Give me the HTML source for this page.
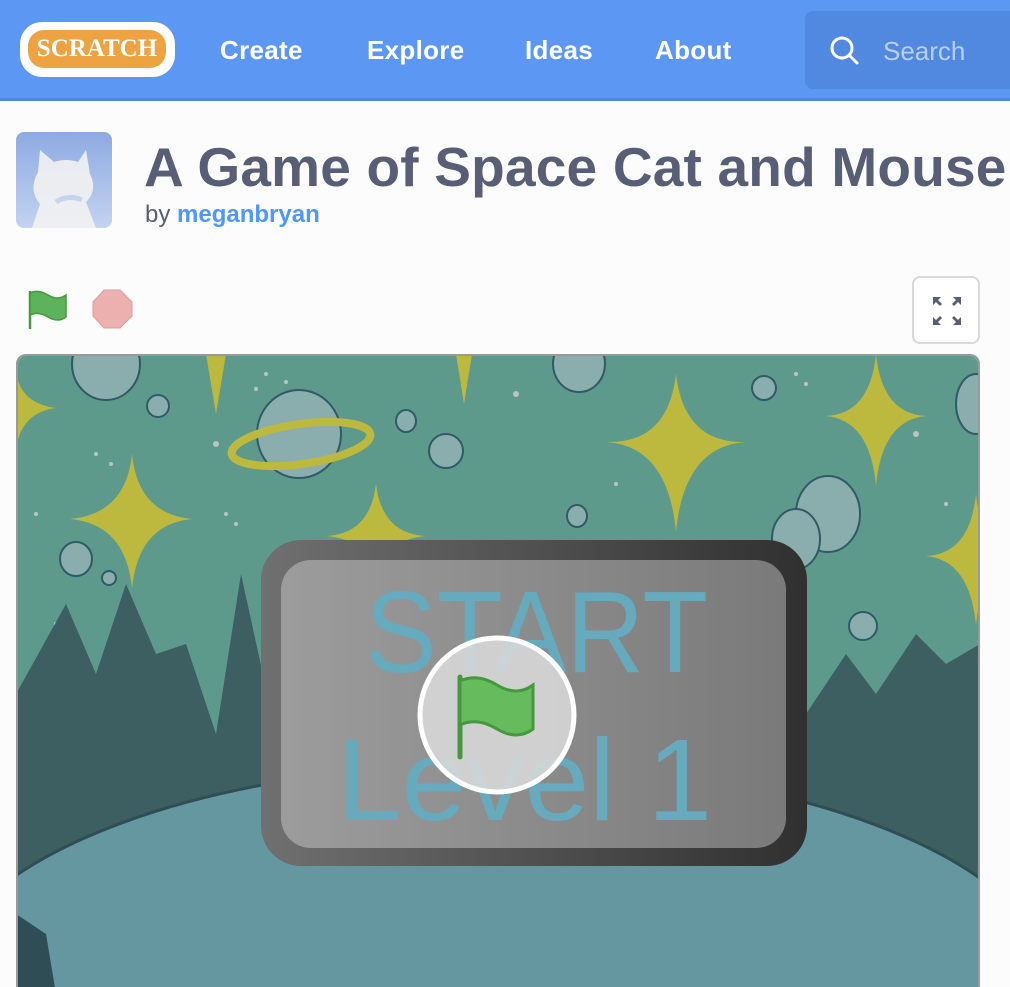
<!DOCTYPE html>
<html><head><meta charset="utf-8"><style>
*{margin:0;padding:0;box-sizing:border-box}
html,body{width:1010px;height:987px;overflow:hidden}
body{background:#fcfcfc;font-family:"Liberation Sans",Helvetica,Arial,sans-serif;position:relative}
.nav{position:absolute;left:0;top:0;width:1010px;height:101px;background:#5d97f4;border-bottom:3px solid #4f85df}
.logo{position:absolute;left:20px;top:22px;width:155px;height:55px;background:#fff;border-radius:22px}
.logo span{position:absolute;left:8px;top:8px;width:138px;height:38px;background:#eea343;border-radius:16px;color:#fff;font:bold 25px "Liberation Serif",serif;text-align:center;line-height:38px}
.nl{position:absolute;top:35px;color:#fff;font-weight:bold;font-size:26px;letter-spacing:0.3px}
.search{position:absolute;left:805px;top:11px;width:220px;height:78px;background:#5188e0;border-radius:8px}
.search span{position:absolute;left:78px;top:25px;color:#b9cff7;font-size:26px}
.avatar{position:absolute;left:16px;top:132px;width:96px;height:96px;border-radius:8px;background:linear-gradient(#8eaae2,#c3d3f0);overflow:hidden}
h1{position:absolute;left:144px;top:135px;font-size:55px;color:#575e75;font-weight:bold;white-space:nowrap;letter-spacing:0.2px}
.by{position:absolute;left:145px;top:201px;font-size:24px;color:#575e75}
.by b{color:#4d97ff}
.fs{position:absolute;left:912px;top:276px;width:68px;height:68px;border:2px solid #d9d9d9;border-radius:8px;background:#fff}
</style></head><body>
<div class="nav">
<div class="logo"><span>SCRATCH</span></div>
<div class="nl" style="left:220px">Create</div>
<div class="nl" style="left:367px">Explore</div>
<div class="nl" style="left:525px">Ideas</div>
<div class="nl" style="left:655px">About</div>
<div class="search"><svg style="position:absolute;left:24px;top:24px" width="32" height="32" viewBox="0 0 32 32"><circle cx="13" cy="13" r="10" fill="none" stroke="#fff" stroke-width="3"/><path d="M20 20l8 8" stroke="#fff" stroke-width="3" stroke-linecap="round"/></svg><span>Search</span></div>
</div>
<div class="avatar"><svg width="96" height="96" viewBox="0 0 96 96"><path d="M22 40 L24 18 L38 30 Q50 26 62 30 L70 18 L74 42 Q82 58 70 70 L80 96 L16 96 L24 72 Q12 58 22 40Z" fill="#f2f2f2" opacity="0.9"/><path d="M40 70 Q52 62 66 68" stroke="#c8d4ee" stroke-width="5" fill="none"/></svg></div>
<h1>A Game of Space Cat and Mouse</h1>
<div class="by">by <b>meganbryan</b></div>
<svg style="position:absolute;left:28px;top:289px" width="42" height="42" viewBox="0 0 42 42"><path d="M2 2 V40" stroke="#45993d" stroke-width="2.5"/><path d="M2 4 Q10 0 20 6 Q30 12 38 6 V28 Q30 34 20 28 Q10 22 2 26Z" fill="#5cb35c" stroke="#45993d" stroke-width="1.5"/></svg>
<svg style="position:absolute;left:92px;top:289px" width="42" height="42" viewBox="0 0 42 42"><path d="M12 1h16l12 12v14l-12 12H12L1 27V13Z" fill="#ecb0ae" stroke="#e09d9b"/></svg>
<div class="fs"><svg style="position:absolute;left:18px;top:18px" width="30" height="30" viewBox="0 0 30 30" fill="#575e75"><path d="M1 1h8l-3 3 4 4-2 2-4-4-3 3z M29 1v8l-3-3-4 4-2-2 4-4-3-3z M1 29v-8l3 3 4-4 2 2-4 4 3 3z M29 29h-8l3-3-4-4 2-2 4 4 3-3z"/></svg></div>
<svg style="position:absolute;left:16px;top:354px" width="964" height="633" viewBox="0 0 964 633">
<defs>
<clipPath id="c"><rect x="0" y="0" width="964" height="660" rx="10"/></clipPath>
<linearGradient id="o" x1="0" x2="1"><stop offset="0" stop-color="#707070"/><stop offset="1" stop-color="#303030"/></linearGradient>
<linearGradient id="i" x1="0" x2="1"><stop offset="0" stop-color="#9c9c9c"/><stop offset="1" stop-color="#7a7a7a"/></linearGradient>
</defs>
<g clip-path="url(#c)">
<rect width="964" height="660" fill="#5e9a8c"/>
<g fill="#d0d0d0" opacity="0.8">
<circle cx="250" cy="20" r="2"/><circle cx="270" cy="28" r="2"/><circle cx="240" cy="35" r="2"/><circle cx="500" cy="40" r="3"/><circle cx="80" cy="100" r="2"/><circle cx="95" cy="110" r="2"/><circle cx="200" cy="90" r="3"/><circle cx="600" cy="130" r="2"/><circle cx="780" cy="20" r="2"/><circle cx="790" cy="30" r="2"/><circle cx="900" cy="80" r="3"/><circle cx="930" cy="150" r="2"/><circle cx="20" cy="160" r="2"/><circle cx="40" cy="270" r="2"/><circle cx="700" cy="260" r="2"/><circle cx="920" cy="340" r="2"/><circle cx="210" cy="160" r="2"/><circle cx="220" cy="170" r="2"/><circle cx="520" cy="250" r="2"/>
</g>
<g fill="#bdb93e">
<path d="M190 0 L200 60 L210 0Z"/><path d="M440 0 L448 50 L456 0Z"/>
<path d="M116 100 q6 60 60 65 q-54 5 -60 70 q-6 -65 -62 -70 q56 -5 62 -65Z"/>
<path d="M660 20 q8 70 70 68 q-62 4 -70 90 q-8 -86 -70 -90 q62 2 70 -68Z"/>
<path d="M860 0 q6 60 50 62 q-44 4 -50 70 q-6 -66 -50 -70 q44 -2 50 -62Z"/>
<path d="M360 130 q6 50 50 52 q-44 4 -50 40 q-6 -36 -50 -40 q44 -2 50 -52Z"/>
<path d="M960 140 q6 60 50 62 q-44 4 -50 70 q-6 -66 -50 -70 q44 -2 50 -62Z"/>
<path d="M0 20 q6 30 40 34 q-34 4 -40 40Z"/>
</g>
<g fill="#8aaeae" stroke="#2f5a66" stroke-width="2">
<ellipse cx="90" cy="10" rx="34" ry="36"/><ellipse cx="142" cy="52" rx="11" ry="11"/>
<ellipse cx="283" cy="80" rx="42" ry="44"/><ellipse cx="390" cy="67" rx="10" ry="11"/>
<ellipse cx="430" cy="97" rx="17" ry="17"/><ellipse cx="563" cy="10" rx="26" ry="28"/>
<ellipse cx="748" cy="34" rx="12" ry="12"/><ellipse cx="812" cy="160" rx="32" ry="38"/>
<ellipse cx="780" cy="185" rx="24" ry="30"/><ellipse cx="960" cy="50" rx="20" ry="30"/>
<ellipse cx="60" cy="205" rx="16" ry="17"/><ellipse cx="93" cy="224" rx="7" ry="7"/>
<ellipse cx="561" cy="162" rx="10" ry="11"/><ellipse cx="847" cy="272" rx="14" ry="14"/>
</g>
<ellipse cx="285" cy="90" rx="70" ry="20" fill="none" stroke="#bdb93e" stroke-width="8" transform="rotate(-8 285 90)"/>
<path d="M0 340 L50 250 L80 320 L110 230 L140 300 L170 290 L200 380 L225 220 L260 380 L260 640 L0 640Z" fill="#3d5f62"/>
<path d="M790 360 L830 300 L860 340 L900 280 L930 310 L964 290 L964 640 L790 640Z" fill="#3d5f62"/>
<ellipse cx="480" cy="640" rx="560" ry="230" fill="#6497a0" stroke="#2f4d55" stroke-width="3"/>
<path d="M0 560 L30 580 L40 640 L0 640Z" fill="#2f4d55"/>
<rect x="245" y="186" width="546" height="326" rx="40" fill="url(#o)"/>
<rect x="265" y="206" width="505" height="288" rx="30" fill="url(#i)"/>
<text x="349" y="318" textLength="343" lengthAdjust="spacingAndGlyphs" font-family="Liberation Sans,sans-serif" font-size="116" fill="#66aabd">START</text>
<text x="321" y="466" textLength="375" lengthAdjust="spacingAndGlyphs" font-family="Liberation Sans,sans-serif" font-size="116" fill="#66aabd">Level 1</text>
<circle cx="481" cy="361" r="77" fill="#dcdcdc" fill-opacity="0.85" stroke="#fff" stroke-width="5"/>
<g transform="translate(441,321)"><path d="M3 2 V82" stroke="#45993d" stroke-width="5" stroke-linecap="round"/><path d="M3 6 Q20 -2 40 10 Q60 22 76 10 V54 Q60 66 40 54 Q20 42 3 50Z" fill="#66bb5c" stroke="#45993d" stroke-width="3"/></g>
</g>
<rect x="1" y="1" width="962" height="660" rx="10" fill="none" stroke="#999" stroke-width="2"/>
</svg>
</body></html>
